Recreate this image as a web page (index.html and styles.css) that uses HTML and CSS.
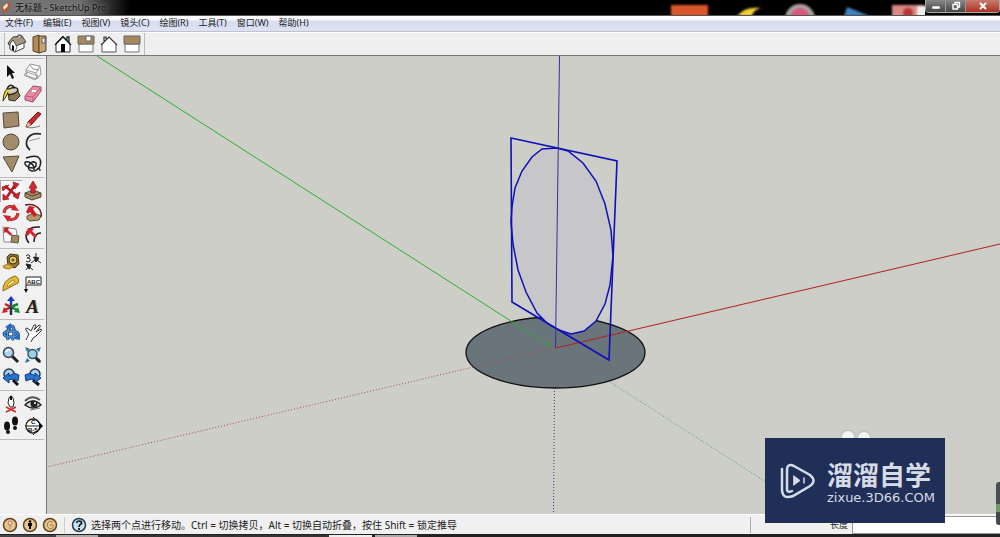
FILE: index.html
```html
<!DOCTYPE html>
<html lang="zh-CN">
<head>
<meta charset="utf-8">
<title>无标题 - SketchUp Pro</title>
<link rel="stylesheet" href="styles.css">
</head>
<body>
<header class="titlebar">
  <svg class="app-icon" viewBox="0 0 12 14"><path d="M2 7 7 2 10 4 9 9 4 13 2 11Z" fill="#b9532f"/><path d="M3 7 7 3 8 6 4 10Z" fill="#f6e4d4"/></svg>
  <h1 class="title">无标题 - SketchUp Pro</h1>
  <svg class="desktop" viewBox="0 0 270 15" aria-hidden="true">
    <g class="soft">
      <rect x="16" y="5" width="37" height="12" fill="#d9562a"/>
      <path d="M82 16Q90 6 106 8Q98 10 97 16Z" fill="#f3cf31"/>
      <circle cx="145" cy="19" r="15" fill="#aaa3a3"/><circle cx="145" cy="18" r="10" fill="#d8567e"/>
      <path d="M192 7 215 16H189Z" fill="#3f83c4"/>
      <rect x="237" y="5" width="32" height="12" fill="#d98884"/><circle cx="253" cy="13" r="5" fill="#b93434"/><rect x="262" y="6" width="10" height="12" fill="#eee"/>
    </g>
  </svg>
  <div class="controls">
    <button class="ctl" aria-label="最小化"><svg viewBox="0 0 12 12"><rect x="2" y="6" width="8" height="3" fill="#fff" stroke="#555" stroke-width=".5"/></svg></button>
    <button class="ctl" aria-label="还原"><svg viewBox="0 0 12 12" fill="none" stroke="#fff" stroke-width="1.4"><path d="M5 4V2.5H9.500V7H8"/><path d="M3 4.500H7.500V9H3Z"/></svg></button>
    <button class="ctl close" aria-label="关闭"><svg viewBox="0 0 12 12"><path d="M3 3 9 9M9 3 3 9" stroke="#fff" stroke-width="2"/></svg></button>
  </div>
</header>
<nav class="menubar">
  <button>文件(F)</button><button>编辑(E)</button><button>视图(V)</button><button>镜头(C)</button><button>绘图(R)</button><button>工具(T)</button><button>窗口(W)</button><button>帮助(H)</button>
</nav>
<div class="toolbar">
  <div class="views">
    <button aria-label="等轴视图"><svg viewBox="0 0 20 20"><path d="M3 9 8 14 8 18 3 15ZM8 12 17 8V14L8 18Z" fill="#fff" stroke="#444"/><path d="M1 9 6 3 15 2 19 8 9 12 6 6 2 11Z" fill="#a6967a" stroke="#444"/><path d="M6 6 3 10V15L8 18 10 13Z" fill="#fff" stroke="#444" stroke-width=".8"/><path d="M5 11 7 12V17L5 16Z"/><path d="M11 3V1H14V4" fill="#ddd" stroke="#444"/></svg></button>
    <button aria-label="俯视图"><svg viewBox="0 0 20 20"><path d="M3 3 9 1V19L3 17Z" fill="#b68b52" stroke="#55452f"/><path d="M9 2H16V17L9 19Z" fill="#c4a173" stroke="#55452f"/><path d="M12 4H15V9H12Z" fill="#fff" stroke="#555"/></svg></button>
    <button aria-label="前视图"><svg viewBox="0 0 20 20"><path d="M3 9V18H17V9L10 2Z" fill="#fff" stroke="#333"/><path d="M2 11 10 3 18 11M14 6V3H16V8" fill="none" stroke="#222" stroke-width="1.300"/><path d="M8 10H12V18H8Z"/></svg></button>
    <button aria-label="右视图"><svg viewBox="0 0 20 20"><path d="M3 10H17V18H3Z" fill="#fff" stroke="#777"/><path d="M2 2H18V10H2Z" fill="#a6875e" stroke="#666"/><path d="M10 2H15V7H10Z" fill="#fff" stroke="#666"/></svg></button>
    <button aria-label="后视图"><svg viewBox="0 0 20 20"><path d="M3 10V18H17V10L10 3Z" fill="#fff" stroke="#555"/><path d="M2 11 10 3 18 11M5 7V3H7V5" fill="none" stroke="#333" stroke-width="1.200"/></svg></button>
    <button aria-label="左视图"><svg viewBox="0 0 20 20"><path d="M3 10H17V18H3Z" fill="#fff" stroke="#777"/><path d="M2 2H18V10H2Z" fill="#a6875e" stroke="#666"/></svg></button>
  </div>
</div>
<main class="workspace">
  <aside class="tools">
    <div class="group">
      <button aria-label="选择"><svg viewBox="0 0 22 22"><path d="M7 4V16L10 13 12 18 14 17 12 12H15Z" fill="#111"/></svg></button>
      <button aria-label="制作组件"><svg viewBox="0 0 22 22" fill="#fafafa" stroke="#999"><path d="M4 9 8 3 18 5 19 13 15 18 5 15Z"/><path d="M4 9 14 12 18 5M14 12 15 18M2 14 5 11 16 15 13 19ZM8 4 11 8 17 9" fill="none"/></svg></button>
      <button aria-label="颜料桶"><svg viewBox="0 0 22 22"><path d="M8 9 17 6 20 13 15 18 9 17Z" fill="#8c7852" stroke="#332c1d"/><ellipse cx="12" cy="8" rx="6" ry="3" transform="rotate(-18 12 8)" fill="#d8ccb2" stroke="#222" stroke-width="1.500"/><path d="M10 6Q4 4 3 18Q7 13 8 9" fill="#f3d62e" stroke="#3c370b"/><path d="M7 6Q10-1 15 5" fill="none" stroke="#222" stroke-width="1.500"/></svg></button>
      <button aria-label="擦除"><svg viewBox="0 0 22 22"><path d="M3 13 11 3 19 4 19 8 11 19 3 17Z" fill="#e98ba3" stroke="#965164"/><path d="M3 13 11 14 19 4M11 14V19" fill="none" stroke="#b86178"/><path d="M10 8 14 8" stroke="#fff" stroke-width="2"/></svg></button>
    </div>
    <div class="group">
      <button aria-label="矩形"><svg viewBox="0 0 22 22"><path d="M3 4 18 3 19 17 4 19Z" fill="#a28c6c" stroke="#55493a"/></svg></button>
      <button aria-label="直线"><svg viewBox="0 0 22 22"><path d="M6 13 16 3 19 5 9 16 4 18Z" fill="#c92a31" stroke="#611"/><path d="M6 13 9 16 4 18Z" fill="#e8c493"/><path d="M4 18Q9 20 18 17" fill="none" stroke="#777"/></svg></button>
      <button aria-label="圆"><svg viewBox="0 0 22 22"><circle cx="11" cy="11" r="8" fill="#a28c6c" stroke="#55493a"/></svg></button>
      <button aria-label="圆弧"><svg viewBox="0 0 22 22" fill="none" stroke="#222"><path d="M19 3Q8 1 5 9Q3 15 8 19" stroke-width="1.700"/><path d="M7 10 18 7" stroke="#999"/></svg></button>
      <button aria-label="多边形"><svg viewBox="0 0 22 22"><path d="M3 4 19 3 12 19Z" fill="#a28c6c" stroke="#55493a"/></svg></button>
      <button aria-label="徒手画"><svg viewBox="0 0 22 22"><path d="M4 5Q12 2 16 4Q20 7 18 13Q16 18 10 18Q5 17 7 12Q10 7 14 10Q15 14 11 15Q5 15 3 11Q2 8 7 9Q13 12 12 17M15 16Q18 14 18 18" fill="none" stroke="#222" stroke-width="1.500"/></svg></button>
    </div>
    <div class="group">
      <button class="active" aria-label="移动"><svg viewBox="0 0 22 22"><path d="M5 6 17 16M15 5 7 17" stroke="#b71722" stroke-width="2.500"/><path d="M2 7 9 5 3 11ZM13 2 19 4 15 9ZM20 12 18 19 13 16ZM3 14 9 19 3 20Z" fill="#d5242c" stroke="#8c1018" stroke-width=".7"/></svg></button>
      <button aria-label="推拉"><svg viewBox="0 0 22 22"><path d="M3 13 11 10 19 13V17L10 20 3 17Z" fill="#a58d66" stroke="#554630"/><path d="M3 13 10 16 19 13" fill="none" stroke="#554630"/><path d="M9 13V8H7L11 1 15 8H13V13Z" fill="#d72931" stroke="#861a1c" stroke-width=".8"/></svg></button>
      <button aria-label="旋转"><svg viewBox="0 0 22 22" fill="none"><path d="M4 11Q5 3 14 5M18 11Q17 19 8 17" stroke="#8c1820" stroke-width="3"/><path d="M4 11Q5 3 14 5M18 11Q17 19 8 17" stroke="#db4247" stroke-width="2"/><path d="M14 2 19 9 11 8ZM8 20 3 13 11 14Z" fill="#cf222a"/></svg></button>
      <button aria-label="路径跟随"><svg viewBox="0 0 22 22"><path d="M5 14 12 11 19 14 17 18 8 19 5 17Z" fill="#b39a6c" stroke="#5c4c2a"/><path d="M3 3Q13 1 18 8 20 12 19 15" fill="none" stroke="#632422" stroke-width="1.500"/><path d="M4 10 7 4 13 5 11 7 15 13 12 15 8 10 6 12Z" fill="#cf1b24"/></svg></button>
      <button aria-label="拉伸"><svg viewBox="0 0 22 22"><path d="M3 3 16 5 18 18 4 18Z" fill="#fbfbfb" stroke="#888"/><path d="M12 11 19 12 18 19 11 18Z" fill="#9e8a6b" stroke="#655943"/><path d="M4 4 9 3 8 6 12 10 11 12 6 8 4 9Z" fill="#d31f2a"/></svg></button>
      <button aria-label="偏移"><svg viewBox="0 0 22 22" fill="none"><path d="M18 3Q5 2 4 11Q4 16 7 19M19 9Q12 9 12 18" stroke="#272020" stroke-width="1.500"/><path d="M4 10 6 4 12 5 10 7 15 12 13 14 8 9 6 12Z" fill="#d6232a"/></svg></button>
    </div>
    <div class="group">
      <button aria-label="卷尺"><svg viewBox="0 0 22 22"><path d="M7 6 10 3 18 4 19 13 15 17 8 15Z" fill="#947434" stroke="#4d390e"/><circle cx="13" cy="9" r="4" fill="#efc54d" stroke="#333"/><circle cx="13" cy="9" r="1.500" fill="#555"/><path d="M3 15 8 13 13 16 9 18 4 17Z" fill="#dfb33a" stroke="#a0782a"/></svg></button>
      <button aria-label="尺寸"><svg viewBox="0 0 22 22" fill="none" stroke="#222"><path d="M4 5Q6 2 8 5Q8 7 5 7Q9 7 8 10Q6 12 4 10M11 6 19 12M4 13 11 19M14 8V2M7 15 4 19M9 12 13 9"/><path d="M12 6 17 7 14 11ZM4 13 9 14 7 18Z" fill="#222"/></svg></button>
      <button aria-label="量角器"><svg viewBox="0 0 22 22"><path d="M3 18Q2 7 15 3Q20 5 18 10Z" fill="#e4bb38" stroke="#8d6c16"/><path d="M7 14Q7 10 14 7L15 9Z" fill="#fff4c4" stroke="#ad8723"/></svg></button>
      <button aria-label="文本"><svg viewBox="0 0 22 22"><path d="M4 4H19V12H4Z" fill="#fff" stroke="#222"/><path d="M4 12V18" stroke="#222"/><path d="M2 16H6L4 20Z"/><text x="5" y="11" class="abc">ABC</text></svg></button>
      <button aria-label="轴"><svg viewBox="0 0 22 22" fill="none" stroke-width="2.500"><path d="M11 12V5" stroke="#173bbd"/><path d="M11 1 15 6H7Z" fill="#173bbd"/><path d="M11 12 5 9M11 12 5 15" stroke="#b82125"/><path d="M11 12 18 9M11 12 17 15" stroke="#18822c"/><path d="M11 12V20" stroke="#222b55"/><path d="M2 18 4 12 8 17Z" fill="#d42429"/><path d="M20 18 14 17 18 12Z" fill="#1d8c31"/></svg></button>
      <button aria-label="三维文本"><svg viewBox="0 0 22 22"><text x="5" y="18" class="letter-back">A</text><text x="4" y="18" class="letter">A</text></svg></button>
    </div>
    <div class="group">
      <button aria-label="环绕观察"><svg viewBox="0 0 22 22" fill="none"><ellipse cx="11" cy="12" rx="7" ry="3" stroke="#183d6e" stroke-width="3"/><path d="M8 18Q6 9 10 4Q15 3 14 12Q14 16 12 18" stroke="#183d6e" stroke-width="3"/><ellipse cx="11" cy="12" rx="7" ry="3" stroke="#4f94df" stroke-width="1.500"/><path d="M8 18Q6 9 10 4Q15 3 14 12Q14 16 12 18" stroke="#4f94df" stroke-width="1.500"/><path d="M5 5 11 1V8ZM14 17 20 11V18Z" fill="#276abb"/></svg></button>
      <button aria-label="平移"><svg viewBox="0 0 22 22"><path d="M4 18 7 12 4 8Q3 6 5 6L9 9 12 3Q14 2 14 4L12 8 17 3Q19 3 18 5L14 10 19 7Q20 8 19 9L14 14 11 16 9 20" fill="#fff" stroke="#333"/></svg></button>
      <button aria-label="缩放"><svg viewBox="0 0 22 22"><path d="M12 12 18 18" stroke="#222" stroke-width="3"/><circle cx="8.500" cy="8.500" r="5" fill="#abd4ef" stroke="#344454" stroke-width="1.500"/><path d="M6 8Q7 5 10 6" fill="none" stroke="#fff" stroke-width="1.500"/></svg></button>
      <button aria-label="充满视窗"><svg viewBox="0 0 22 22"><path d="M3 3 8 5 5 8ZM19 3 17 8 14 5ZM3 19 5 14 8 17ZM19 19 14 17 17 14Z" fill="#247199"/><path d="M13 13 18 18" stroke="#222" stroke-width="3"/><circle cx="10.500" cy="10" r="4.500" fill="#9fcfe8" stroke="#355263" stroke-width="1.500"/></svg></button>
      <button aria-label="上一个"><svg viewBox="0 0 22 22"><circle cx="9" cy="8" r="5" fill="#a7d1f0" stroke="#283b4c" stroke-width="1.500"/><path d="M13 14 18 19" stroke="#111" stroke-width="3"/><path d="M3 12 9 7V10Q14 6 19 9L18 15Q12 12 9 14V17Z" fill="#2773cf" stroke="#153c77"/></svg></button>
      <button aria-label="下一个"><svg viewBox="0 0 22 22"><circle cx="13" cy="8" r="5" fill="#a7d1f0" stroke="#283b4c" stroke-width="1.500"/><path d="M11 14 17 19" stroke="#111" stroke-width="3"/><path d="M19 12 13 7V10Q8 6 3 9L4 15Q10 12 13 14V17Z" fill="#2773cf" stroke="#153c77"/></svg></button>
    </div>
    <div class="group">
      <button aria-label="定位镜头"><svg viewBox="0 0 22 22"><path d="M9 5Q11 1 13 5L14 10 13 14H10L8 10Z" fill="#fff" stroke="#222"/><path d="M11 3V7" stroke="#111" stroke-width="2"/><path d="M6 14 16 19M16 14 6 19" stroke="#ce272e" stroke-width="1.500"/></svg></button>
      <button aria-label="绕轴旋转"><svg viewBox="0 0 22 22"><path d="M3 8Q10 1 18 7" fill="none" stroke="#555" stroke-width="2"/><path d="M3 12Q11 4 19 12Q11 18 3 12Z" fill="#ddd" stroke="#222" stroke-width="1.500"/><circle cx="12" cy="11" r="3.500" fill="#222"/><circle cx="13" cy="10" r="1" fill="#fff"/><path d="M8 17 18 15" stroke="#777"/></svg></button>
      <button aria-label="漫游"><svg viewBox="0 0 22 22" fill="#111"><ellipse cx="7" cy="11" rx="3" ry="4.500"/><ellipse cx="8" cy="17" rx="2" ry="2"/><ellipse cx="15" cy="6" rx="3" ry="4.500"/><ellipse cx="15" cy="13" rx="2" ry="2"/></svg></button>
      <button aria-label="截平面"><svg viewBox="0 0 22 22"><circle cx="11" cy="11" r="7" fill="#fff" stroke="#222" stroke-width="1.300"/><path d="M11 2 20 11 11 20M3 11H19" fill="none" stroke="#222"/><path d="M17 7 21 11 17 15Z"/><text x="9" y="9" class="tiny">C</text><text x="6" y="17" class="tiny">B-5</text></svg></button>
    </div>
  </aside>
  <section class="viewport" aria-label="模型">
    <svg class="scene" viewBox="47 56 953 458" preserveAspectRatio="xMidYMid slice">
      <ellipse cx="555.500" cy="352.500" rx="89.500" ry="35.500" fill="#6a747b" stroke="#111" stroke-width="1.300"/>
      <g fill="none" stroke-width="1">
        <path d="M97 56 553 348" stroke="#2fae2f"/>
        <path d="M556 348 1000 244" stroke="#b32020"/>
        <path d="M555 348 47 467" stroke="#b44" stroke-dasharray="1 2"/>
        <path d="M554.500 388 553.500 514" stroke="#33399a" stroke-dasharray="1 2"/>
        <path d="M610 382 816 514" stroke="#449b83" stroke-dasharray="1 2"/>
      </g>
      <path d="M557 148 542 149 532 157 522 171 515 188 512 207 511 222 513 244 518 270 526 292 537 313 548 324 559 330 571 334 584 331 596 321 605 304 610 285 613 256 611 230 605 204 596 181 583 163 568 151Z" fill="#c7c7c9" stroke="#1010b8" stroke-width="1.500"/>
      <path d="M511 138 617 161 609 360 512 302Z" fill="none" stroke="#1010b8" stroke-width="1.600"/>
      <path d="M559.500 56 555.500 348" stroke="#33339b"/>
      <g fill="#f3f5f3" stroke="#b9bbb7"><circle cx="848" cy="437" r="6.500"/><circle cx="864" cy="438" r="6.500"/></g>
    </svg>
  </section>
</main>
<footer class="status">
  <div class="badges">
    <button aria-label="地理位置"><svg viewBox="0 0 16 16"><circle cx="8" cy="8" r="6.500" fill="#e6c58e" stroke="#65451e" stroke-width="1.500"/><circle cx="8" cy="6" r="2" fill="#eee0d3" stroke="#b47a54"/><path d="M8 8V12" stroke="#b47a54"/></svg></button>
    <button aria-label="作者"><svg viewBox="0 0 16 16"><circle cx="8" cy="8" r="6.500" fill="#e6c58e" stroke="#65451e" stroke-width="1.500"/><circle cx="8" cy="4.500" r="1.300"/><path d="M6 6H10V9H9V12H7V9H6Z"/></svg></button>
    <button aria-label="登录"><svg viewBox="0 0 16 16"><circle cx="8" cy="8" r="6.500" fill="#e4c58f" stroke="#65451e" stroke-width="1.500"/><path d="M11 5Q8 3 5.500 6Q4 10 8 12L11 11V8H8" fill="none" stroke="#a98450"/></svg></button>
  </div>
  <button class="help" aria-label="帮助"><svg viewBox="0 0 16 16"><circle cx="8" cy="8" r="6.500" fill="#c9e2f1" stroke="#203b50" stroke-width="1.500"/><path d="M5.500 6Q6 4 8 4Q11 4 10.500 6.500Q8 8 8 10M8 11V13" fill="none" stroke="#111" stroke-width="1.700"/></svg></button>
  <p class="hint">选择两个点进行移动。Ctrl = 切换拷贝，Alt = 切换自动折叠，按住 Shift = 锁定推导</p>
  <div class="measure"><label for="length">长度</label><input id="length" type="text"></div>
</footer>
<div class="taskbar"></div>
<div class="edge-widget"></div>
<div class="watermark">
  <svg class="mark" viewBox="0 0 36 38" fill="none" stroke="#d6dce5" stroke-width="2.500" stroke-linecap="round"><path d="M2 7V27Q2 38 13 34L30 24Q37 19 30 13L14 4Q7 1 7 8V28Q8 31 12 29"/><path d="M14 14 20 18.500 14 23Z" fill="#d6dce5" stroke-width="1"/><path d="M24 16V21" stroke-width="1.500"/></svg>
  <div class="brand"><strong>溜溜自学</strong><span>zixue.3D66.COM</span></div>
</div>
</body>
</html>
```
FILE: styles.css
```css
* { box-sizing: border-box; }
body {
  position: relative;
  display: flex;
  flex-direction: column;
  height: 100vh;
  margin: 0;
  overflow: hidden;
  background: #f0f0f0;
  color: #222;
  font: 9px/14px "Noto Sans", "Noto Sans CJK SC", sans-serif;
}
button { padding: 0; border: 0; background: none; color: inherit; font: inherit; }
svg { display: block; }

.titlebar {
  display: flex;
  flex: none;
  height: 16px;
  border-bottom: 1px solid #555;
  background: linear-gradient(90deg, #777 0, #6d6d6d 80px, #000 130px);
}
.app-icon { width: 12px; height: 14px; margin-right: 3px; }
.title { flex: 1; margin: 0; color: #111; font-size: 9px; font-weight: 400; line-height: 15px; text-shadow: 0 0 4px #aaa; }
.desktop { width: 270px; height: 15px; }
.soft { filter: blur(1px); }
.controls { display: flex; height: 13px; border: 1px solid #aaa; border-top: 0; border-radius: 0 0 4px 4px; overflow: hidden; }
.ctl { display: flex; align-items: center; justify-content: center; width: 20px; border-right: 1px solid #999; background: linear-gradient(#888, #444); }
.ctl svg { width: 12px; height: 12px; }
.ctl.close { width: 33px; border: 0; background: linear-gradient(#c77c70, #ac3020); }

.menubar {
  display: flex;
  flex: none;
  gap: 10px;
  height: 16px;
  padding: 0 0 1px 5px;
  border-bottom: 1px solid #bfc2cd;
  background: linear-gradient(#fff 0, #f8f9ff 4px, #d8def0 5px, #dde3f4 100%);
}
.toolbar { flex: none; height: 23px; border-top: 1px solid #fff; background: #efefef; }
.views { display: flex; width: max-content; height: 22px; gap: 3px; margin-left: 4px; padding: 0 2px; border: solid #bbb; border-width: 0 1px; }
.views svg { width: 20px; height: 20px; }

.workspace { display: flex; flex: 1; min-height: 0; border-top: 1px solid #777; }
.tools { flex: none; width: 47px; padding-top: 2px; border-right: 1px solid #777; background: #f1f1f1; }
.group { display: grid; grid-template-columns: 22px 22px; width: 44px; padding: 2px 0; border-top: 1px solid #bbb; }
.group:first-child { padding-bottom: 1px; }
.group:last-child { border-bottom: 1px solid #bbb; }
.group svg { width: 22px; height: 22px; }
.active { background: #fafafa; box-shadow: inset 1px 1px #aaa; }
.abc { font: bold 6px "Liberation Sans", sans-serif; fill: #222; stroke: none; }
.letter { font: italic bold 19px "Liberation Serif", serif; fill: #222; }
.letter-back { font: italic bold 19px "Liberation Serif", serif; fill: #a38b65; }
.tiny { font: bold 6px "Liberation Sans", sans-serif; }
.viewport { flex: 1; min-width: 0; background: #cdcec8; }
.scene { width: 100%; height: 100%; }

.status { display: flex; flex: none; align-items: center; height: 20px; border-top: 1px solid #fff; background: #f0f0f0; }
.status svg { width: 16px; height: 16px; }
.badges { display: flex; gap: 4px; padding: 0 6px 0 2px; border-right: 1px solid #ccc; }
.help { margin: 0 4px 0 6px; }
.hint { flex: 1; margin: 0; font-size: 10px; white-space: nowrap; }
.measure { display: flex; align-items: center; justify-content: flex-end; width: 25%; height: 16px; border-left: 1px solid #aaa; }
.measure label { margin-right: 4px; }
.measure input { width: 148px; height: 18px; padding: 0; border: 1px solid #999; border-right: 0; background: #fff; }
.taskbar {
  flex: none;
  height: 3px;
  border-top: 1px solid #222;
  background: linear-gradient(90deg, #444 56px, #aaa 56px 98px, #333 98px 329px, #eee 329px 372px, #222 372px 375px, #aaa 375px 417px, #222 417px);
}
.edge-widget { position: absolute; right: 0; bottom: 12px; width: 4px; height: 43px; border-radius: 3px 0 0 3px; background: linear-gradient(#4b4e55 50%, #6e9b63 50% 70%, #44484c 70%); }
.watermark { position: absolute; right: 55px; bottom: 14px; display: flex; align-items: center; gap: 11px; width: 180px; height: 85px; padding-left: 15px; background: #202f58; color: #d6dce5; }
.mark { width: 36px; height: 38px; }
.brand { display: flex; flex-direction: column; }
.brand strong { font: 700 26px/34px "Noto Sans CJK SC", sans-serif; }
.brand span { font: 13px/14px "DejaVu Sans", sans-serif; }
```
